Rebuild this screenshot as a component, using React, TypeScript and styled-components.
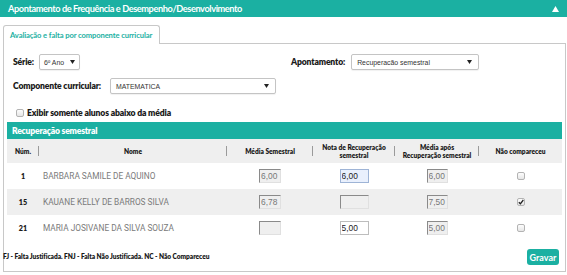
import React from 'react';
import styled, { createGlobalStyle } from 'styled-components';

const TEAL = '#1bb0a2';
const RFONT = "'Lato', 'Open Sans', sans-serif";
const DFONT = "'Roboto', 'Liberation Sans', sans-serif";
const AFONT = "'Liberation Sans', Arial, sans-serif";

const GlobalStyle = createGlobalStyle`
  html, body { margin: 0; padding: 0; background: #fff; }
  body { font-family: ${RFONT}; }
  * { box-sizing: border-box; }
`;

const Page = styled.div`
  width: 567px;
  height: 275px;
  overflow: hidden;
`;

const TitleBar = styled.div`
  height: 17px;
  background: ${TEAL};
  color: #fff;
  display: flex;
  align-items: center;
  justify-content: space-between;
  padding: 0 8px;
  font: 700 9.2px ${RFONT};
  letter-spacing: -0.4px;
`;

const TabStrip = styled.div`
  display: flex;
  align-items: flex-end;
  height: 19px;
  margin: 8px 1px 0 3px;
`;

const Tab = styled.div`
  height: 19px;
  width: 157px;
  border: 1px solid #c8c8c8;
  border-bottom: none;
  border-radius: 3px 3px 0 0;
  background: #fff;
  color: ${TEAL};
  font: 700 7.6px ${RFONT};
  letter-spacing: -0.1px;
  display: flex;
  align-items: center;
  padding-left: 6px;
`;

const TabLine = styled.div`
  flex: 1;
  height: 100%;
  border-bottom: 1px solid #c8c8c8;
`;

const Panel = styled.div`
  margin: 0 1px 0 3px;
  height: 228px;
  border: 1px solid #c8c8c8;
  border-top: none;
  padding: 0 3px;
`;

const Filters = styled.div`
  padding: 10px 0 0 6px;
  display: flex;
  flex-direction: column;
`;

const FilterRow = styled.div<{ $mt?: number }>`
  display: flex;
  align-items: center;
  height: 16px;
  margin-top: ${(p) => p.$mt ?? 0}px;
`;

const FieldGroup = styled.div<{ $w?: number; $gap: number }>`
  display: flex;
  align-items: center;
  gap: ${(p) => p.$gap}px;
  ${(p) => (p.$w ? `width: ${p.$w}px;` : '')}
`;

const Label = styled.span`
  font: 800 8.6px ${RFONT};
  letter-spacing: -0.15px;
  color: #1a1a1a;
`;

const SelectBox = styled.div<{ $w: number; $px?: number }>`
  width: ${(p) => p.$w}px;
  height: 16px;
  border: 1px solid #c4c4c4;
  border-radius: 2px;
  background: #fff;
  box-shadow: 0 1px 1px rgba(0, 0, 0, 0.06);
  display: flex;
  align-items: center;
  justify-content: space-between;
  padding: 0 ${(p) => p.$px ?? 6}px 0 ${(p) => p.$px ?? 5}px;
  font: 6.9px ${AFONT};
  color: #333;
`;

const CheckRow = styled.label`
  display: flex;
  align-items: center;
  gap: 3px;
  margin: 14px 0 0 3px;
  height: 9px;
`;

const Box = styled.span`
  width: 8px;
  height: 8px;
  border: 1px solid #b3b3b3;
  border-radius: 2px;
  background: linear-gradient(#fdfdfd, #e6e6e6);
  display: inline-flex;
  align-items: center;
  justify-content: center;
`;

const SectionBar = styled.div`
  margin-top: 5px;
  height: 17px;
  background: ${TEAL};
  color: #fff;
  font: 800 8.6px ${RFONT};
  letter-spacing: -0.2px;
  display: flex;
  align-items: center;
  padding-left: 5px;
`;

const Grid = styled.div<{ $alt?: boolean; $h: number }>`
  display: grid;
  grid-template-columns: 32px 188px 86px 82px 84px 83px;
  height: ${(p) => p.$h}px;
  background: ${(p) => (p.$alt ? '#efefef' : '#fff')};
  align-items: center;
`;

const HeadCell = styled.div<{ $sep?: boolean }>`
  position: relative;
  height: 100%;
  display: flex;
  align-items: center;
  justify-content: center;
  text-align: center;
  font: 800 6.6px ${RFONT};
  line-height: 1.25;
  color: #1a1a1a;
  &::after {
    content: '';
    display: ${(p) => (p.$sep ? 'block' : 'none')};
    position: absolute;
    right: 0;
    top: 7px;
    height: 10px;
    width: 1px;
    background: #9a9a9a;
  }
`;

const NumCell = styled.div`
  text-align: center;
  font: 800 7.2px ${RFONT};
  color: #1a1a1a;
`;

const NameCell = styled.div`
  padding-left: 4px;
  font: 8.3px ${DFONT};
  color: #7a7a7a;
  white-space: nowrap;
`;

const Cell = styled.div`
  display: flex;
  justify-content: center;
  align-items: center;
`;

const Field = styled.input<{ $w: number; $kind: 'off' | 'on' | 'focus' }>`
  width: ${(p) => p.$w}px;
  height: 14px;
  padding: 0 0 0 1px;
  margin: 0;
  font: 8.4px ${AFONT};
  outline: none;
  ${(p) =>
    p.$kind === 'off'
      ? `background: #efefef; color: #777; border: 1px solid #e0e0e0; border-top-color: #8a8a8a; border-left-color: #8a8a8a;`
      : p.$kind === 'focus'
      ? `background: #e9f0fd; color: #222; border: 1px solid #9eb4d6;`
      : `background: #fff; color: #222; border: 1px solid #bdbdbd;`}
`;

const Footer = styled.div`
  display: flex;
  justify-content: space-between;
  align-items: flex-start;
  margin-top: 8px;
  padding-right: 3px;
`;

const Legend = styled.div`
  margin: 3px 0 0 -4px;
  font: 800 6.6px ${RFONT};
  letter-spacing: -0.05px;
  color: #1a1a1a;
`;

const SaveButton = styled.button`
  width: 32px;
  height: 16px;
  border: none;
  border-radius: 3px;
  background: ${TEAL};
  color: #fff;
  font: 700 9px ${RFONT};
  padding: 0;
  cursor: pointer;
`;

const Arrow = ({ up }: { up?: boolean }) =>
  up ? (
    <svg width="7" height="6" viewBox="0 0 7 6">
      <path d="M0 6 L3.5 0 L7 6 Z" fill="#fff" />
    </svg>
  ) : (
    <svg width="5" height="4" viewBox="0 0 5 4">
      <path d="M0 0 L5 0 L2.5 4 Z" fill="#222" />
    </svg>
  );

const Check = () => (
  <svg width="6" height="6" viewBox="0 0 6 6">
    <path d="M0.8 3.2 L2.4 4.8 L5.3 1" stroke="#222" strokeWidth="1.3" fill="none" />
  </svg>
);

type Row = {
  n: string;
  name: string;
  media: string;
  nota: string;
  notaKind: 'off' | 'on' | 'focus';
  apos: string;
  nc: boolean;
};

const rows: Row[] = [
  { n: '1', name: 'BARBARA SAMILE DE AQUINO', media: '6,00', nota: '6,00', notaKind: 'focus', apos: '6,00', nc: false },
  { n: '15', name: 'KAUANE KELLY DE BARROS SILVA', media: '6,78', nota: '', notaKind: 'off', apos: '7,50', nc: true },
  { n: '21', name: 'MARIA JOSIVANE DA SILVA SOUZA', media: '', nota: '5,00', notaKind: 'on', apos: '5,00', nc: false },
];

export default function App() {
  return (
    <Page>
      <GlobalStyle />
      <TitleBar>
        <span>Apontamento de Frequência e Desempenho/Desenvolvimento</span>
        <Arrow up />
      </TitleBar>
      <TabStrip>
        <Tab>Avaliação e falta por componente curricular</Tab>
        <TabLine />
      </TabStrip>
      <Panel>
        <Filters>
          <FilterRow>
            <FieldGroup $w={278} $gap={5}>
              <Label>Série:</Label>
              <SelectBox $w={41} $px={4}>
                <span>6º Ano</span>
                <Arrow />
              </SelectBox>
            </FieldGroup>
            <FieldGroup $gap={6}>
              <Label>Apontamento:</Label>
              <SelectBox $w={128}>
                <span>Recuperacão semestral</span>
                <Arrow />
              </SelectBox>
            </FieldGroup>
          </FilterRow>
          <FilterRow $mt={8}>
            <FieldGroup $gap={9}>
              <Label>Componente curricular:</Label>
              <SelectBox $w={166}>
                <span>MATEMATICA</span>
                <Arrow />
              </SelectBox>
            </FieldGroup>
          </FilterRow>
          <CheckRow>
            <Box />
            <Label>Exibir somente alunos abaixo da média</Label>
          </CheckRow>
        </Filters>
        <SectionBar>Recuperação semestral</SectionBar>
        <Grid $alt $h={24}>
          <HeadCell $sep>Núm.</HeadCell>
          <HeadCell $sep>Nome</HeadCell>
          <HeadCell $sep>Média Semestral</HeadCell>
          <HeadCell $sep>
            Nota de Recuperação
            <br />
            semestral
          </HeadCell>
          <HeadCell $sep>
            Média após
            <br />
            Recuperação semestral
          </HeadCell>
          <HeadCell>Não compareceu</HeadCell>
        </Grid>
        {rows.map((r, i) => (
          <Grid key={r.n} $alt={i === 1} $h={26}>
            <NumCell>{r.n}</NumCell>
            <NameCell>{r.name}</NameCell>
            <Cell>
              <Field $w={22} $kind="off" value={r.media} readOnly />
            </Cell>
            <Cell>
              <Field $w={29} $kind={r.notaKind} value={r.nota} readOnly />
            </Cell>
            <Cell>
              <Field $w={21} $kind="off" value={r.apos} readOnly />
            </Cell>
            <Cell>
              <Box>{r.nc ? <Check /> : null}</Box>
            </Cell>
          </Grid>
        ))}
        <Footer>
          <Legend>FJ - Falta Justificada. FNJ - Falta Não Justificada. NC - Não Compareceu</Legend>
          <SaveButton>Gravar</SaveButton>
        </Footer>
      </Panel>
    </Page>
  );
}
